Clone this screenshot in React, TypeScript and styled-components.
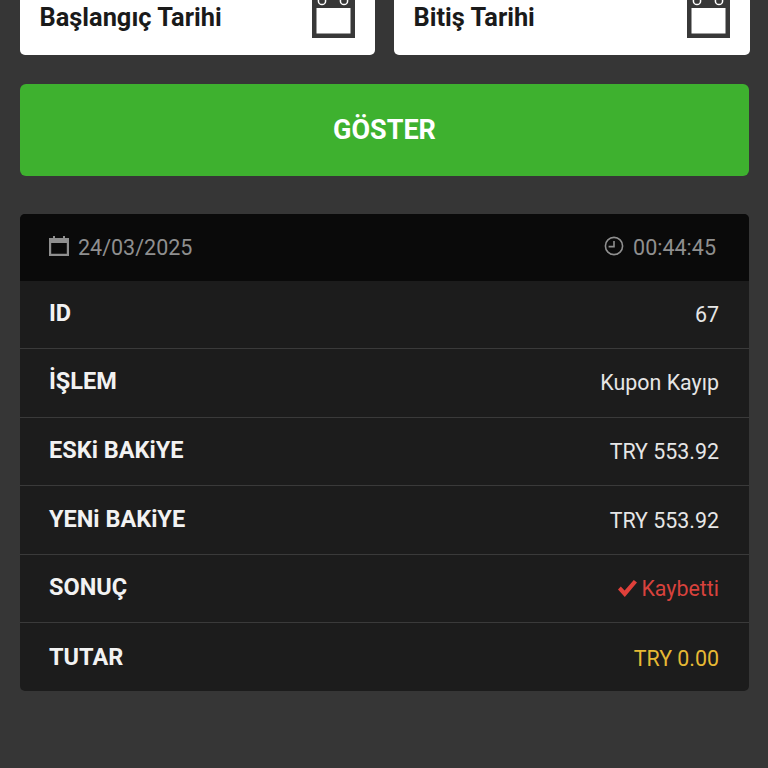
import React from 'react';
import styled, { createGlobalStyle } from 'styled-components';

const GlobalStyle = createGlobalStyle`
  html, body {
    margin: 0;
    padding: 0;
    background: #363636;
    font-family: Roboto, "Liberation Sans", sans-serif;
  }
`;

const Page = styled.div`
  width: 768px;
  height: 768px;
  overflow: hidden;
  box-sizing: border-box;
  padding: 0 19px 0 20px;
  background: #363636;
`;

const DateRow = styled.div`
  display: grid;
  grid-template-columns: 355px 356px;
  gap: 19px;
  height: 55px;
`;

const DateField = styled.div`
  display: flex;
  align-items: flex-end;
  justify-content: space-between;
  box-sizing: border-box;
  height: 55px;
  padding: 0 20px 17.5px 19.5px;
  background: #fff;
  border-radius: 0 0 5px 5px;
`;

const DateLabel = styled.span`
  font-size: 25.4px;
  line-height: 34px;
  font-weight: 700;
  color: #1a1a1a;
  margin-bottom: 4px;
`;

const CalendarIcon = styled.svg`
  display: block;
  width: 43px;
  height: 38px;
`;

const ShowButton = styled.button`
  display: block;
  width: 100%;
  height: 92px;
  margin-top: 29px;
  border: 0;
  border-radius: 6px;
  background: #3eb12f;
  color: #fff;
  font-family: inherit;
  font-size: 27px;
  font-weight: 700;
`;

const Card = styled.div`
  margin-top: 38px;
  background: #1c1c1c;
  border-radius: 5px;
  overflow: hidden;
`;

const CardHeader = styled.div`
  display: flex;
  align-items: center;
  justify-content: space-between;
  height: 66.5px;
  padding: 0 33px 0 29px;
  background: #0a0a0a;
  color: #8f8f8f;
  font-size: 21.5px;
`;

const Stamp = styled.span`
  display: flex;
  align-items: center;
  gap: 9px;
`;

const StampIcon = styled.svg`
  display: block;
  margin-top: -3px;
`;

const Row = styled.div`
  display: flex;
  align-items: center;
  justify-content: space-between;
  box-sizing: border-box;
  height: 68.6px;
  padding: 0 29px 2px;
  border-bottom: 1px solid #3a3a3a;

  &:last-child {
    height: 67.5px;
    padding-bottom: 0;
    border-bottom: 0;
  }
`;

const RowLabel = styled.span`
  font-size: 23.5px;
  font-weight: 700;
  color: #f2f2f2;
  margin-bottom: 1px;
`;

const RowValue = styled.span<{ $color?: string }>`
  display: flex;
  align-items: center;
  gap: 4px;
  font-size: 21.4px;
  margin: 2px 1px 0 0;
  color: ${(p) => p.$color || '#e6e6e6'};
`;

const rows = [
  { label: 'ID', value: '67' },
  { label: 'İŞLEM', value: 'Kupon Kayıp' },
  { label: 'ESKi BAKiYE', value: 'TRY 553.92' },
  { label: 'YENi BAKiYE', value: 'TRY 553.92' },
  { label: 'SONUÇ', value: 'Kaybetti', color: '#d8423c', check: true },
  { label: 'TUTAR', value: 'TRY 0.00', color: '#e6b934' },
];

const BigCalendar: React.FC = () => (
  <CalendarIcon viewBox="0 0 43 38">
    <rect x="0" y="-4" width="43" height="42" fill="#383838" />
    <rect x="4.5" y="8" width="34" height="25.5" fill="#fff" />
    <circle cx="10" cy="1" r="3.6" fill="none" stroke="#fff" strokeWidth="1.5" />
    <circle cx="32" cy="1" r="3.6" fill="none" stroke="#fff" strokeWidth="1.5" />
  </CalendarIcon>
);

const App: React.FC = () => (
  <Page>
    <GlobalStyle />
    <DateRow>
      <DateField>
        <DateLabel>Başlangıç Tarihi</DateLabel>
        <BigCalendar />
      </DateField>
      <DateField>
        <DateLabel>Bitiş Tarihi</DateLabel>
        <BigCalendar />
      </DateField>
    </DateRow>
    <ShowButton>GÖSTER</ShowButton>
    <Card>
      <CardHeader>
        <Stamp>
          <StampIcon width="20" height="20" viewBox="0 0 20 20">
            <path d="M0 2h20v18H0z M2.2 7v10.8h15.6V7z" fill="#8f8f8f" fillRule="evenodd" />
            <rect x="4" y="0" width="2" height="3.4" fill="#8f8f8f" />
            <rect x="14" y="0" width="2" height="3.4" fill="#8f8f8f" />
          </StampIcon>
          24/03/2025
        </Stamp>
        <Stamp>
          <StampIcon width="20" height="20" viewBox="0 0 20 20" fill="none" stroke="#8f8f8f" strokeWidth="1.6">
            <circle cx="10" cy="10" r="8.6" />
            <path d="M10 5v5.6H4.6" />
          </StampIcon>
          00:44:45
        </Stamp>
      </CardHeader>
      {rows.map((row) => (
        <Row key={row.label}>
          <RowLabel>{row.label}</RowLabel>
          <RowValue $color={row.color}>
            {row.check && (
              <svg width="19" height="17" viewBox="0 0 19 17">
                <path d="M0 9.5L2.8 6.6 6.6 10.4 15.8 0 19 2.6 6.8 17z" fill="#e0403a" />
              </svg>
            )}
            {row.value}
          </RowValue>
        </Row>
      ))}
    </Card>
  </Page>
);

export default App;
